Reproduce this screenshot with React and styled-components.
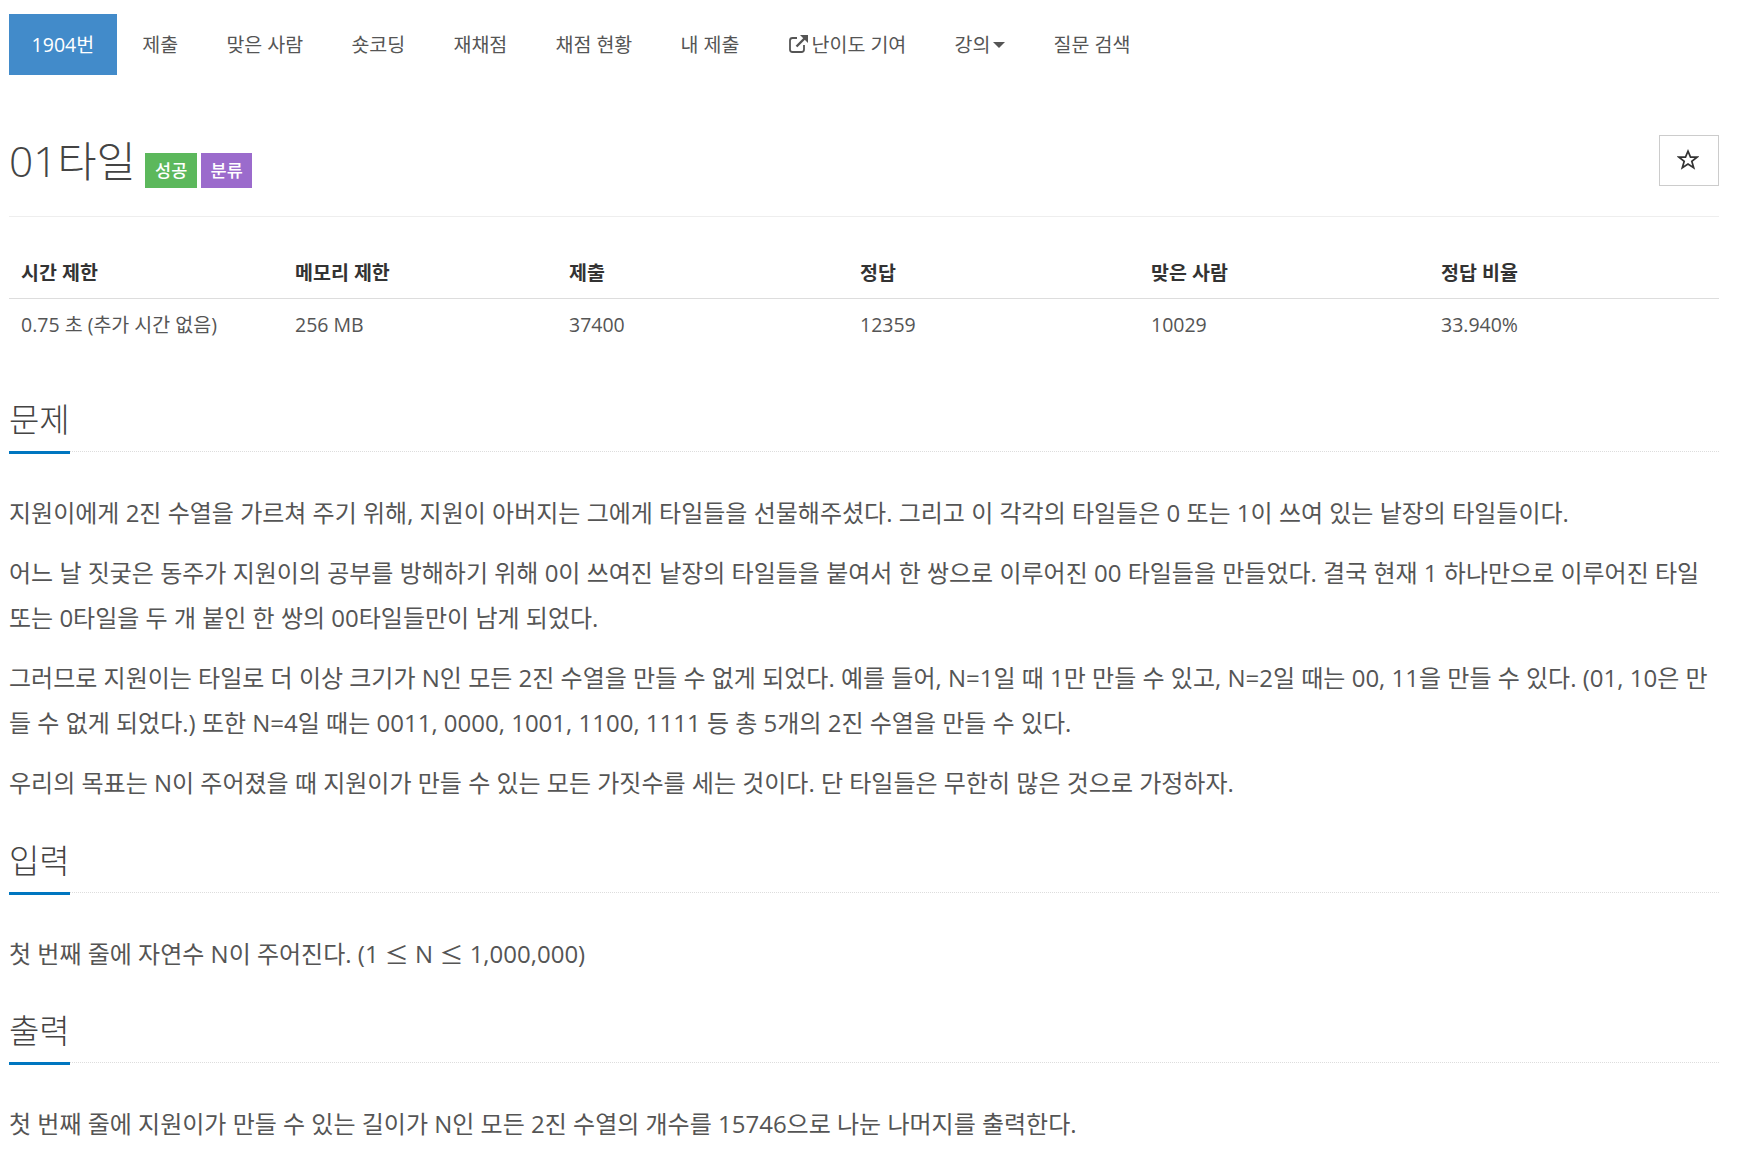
import React from 'react'
import styled, { createGlobalStyle } from 'styled-components'

const GlobalStyle = createGlobalStyle`
  html, body {
    margin: 0;
    padding: 0;
    background: #fff;
    font-family: "Open Sans", "Noto Sans CJK KR", sans-serif;
    color: #555;
  }
`

const Page = styled.div`
  width: 1710px;
  margin-left: 9px;
  padding-top: 14px;
  padding-bottom: 17px;
`

const Nav = styled.nav`
  display: flex;
  gap: 3px;
  height: 61px;
`

const NavItem = styled.a`
  display: flex;
  align-items: center;
  gap: ${p => (p.$gap ? p.$gap : 0)}px;
  padding: 0 22.6px 2px;
  font-size: 19.5px;
  color: ${p => (p.$active ? '#fff' : '#555')};
  background: ${p => (p.$active ? '#428bca' : 'transparent')};
`

const Caret = styled.span`
  width: 0;
  height: 0;
  margin-left: 3px;
  margin-top: 3px;
  border-top: 6px solid #555;
  border-left: 6px solid transparent;
  border-right: 6px solid transparent;
`

const TitleRow = styled.header`
  display: flex;
  align-items: flex-start;
  justify-content: space-between;
  height: 142px;
  box-sizing: border-box;
  padding-top: 60px;
  border-bottom: 1.5px solid #eee;
`

const TitleGroup = styled.div`
  display: flex;
  align-items: flex-start;
`

const Title = styled.h1`
  margin: 0;
  font-size: 42.5px;
  line-height: 52px;
  font-weight: 300;
  color: #444;
`

const Badge = styled.span`
  display: flex;
  align-items: center;
  justify-content: center;
  width: ${p => p.$width}px;
  height: 35px;
  margin-top: 18px;
  margin-left: ${p => p.$left}px;
  padding-bottom: 2px;
  box-sizing: border-box;
  font-size: 17.5px;
  font-weight: 500;
  color: #fff;
  background: ${p => p.$color};
`

const StarButton = styled.button`
  display: flex;
  align-items: center;
  justify-content: center;
  width: 60px;
  height: 51px;
  padding: 0 2px 3px 0;
  background: #fff;
  border: 1.5px solid #ccc;
  color: #333;
`

const InfoGrid = styled.div`
  display: grid;
  grid-template-columns: 274px 274px 291px 291px 290px 290px;
  margin-top: 30px;
`

const HeadCell = styled.div`
  padding: 0 12px;
  height: 51px;
  line-height: 51px;
  font-size: 19.5px;
  font-weight: 700;
  color: #333;
  border-bottom: 1.5px solid #ddd;
`

const BodyCell = styled.div`
  padding: 0 12px;
  height: 53px;
  line-height: 51px;
  font-size: 19.5px;
  color: #555;
`

const Section = styled.section`
  margin-top: ${p => p.$top}px;
`

const Heading = styled.div`
  height: 56px;
  border-bottom: 1px dotted #ddd;
`

const HeadingText = styled.h2`
  display: inline-block;
  height: 56px;
  margin: 0;
  font-size: 33px;
  line-height: 50px;
  font-weight: 300;
  color: #444;
  border-bottom: 3px solid #0076c0;
`

const Body = styled.div`
  padding-top: 38px;
`

const Para = styled.p`
  margin: 0 0 15px;
  font-size: 24px;
  line-height: 45px;
  color: #555;
  word-break: break-all;
`

const MathSign = styled.span`
  font-family: "Noto Sans CJK KR", sans-serif;
  font-size: 24px;
  line-height: 1;
  vertical-align: -1px;
`

function StarIcon() {
  return (
    <svg width="22" height="21" viewBox="0 0 22 21" fill="none" stroke="currentColor" strokeWidth="1.7">
      <path d="M11 2.2l2.5 6h6.500l-5.200 4.100 1.900 6.500L11 15l-5.700 3.800 1.900-6.500L2 8.200h6.500z" />
    </svg>
  )
}

function ExternalIcon() {
  return (
    <svg width="21" height="20" viewBox="0 0 21 20" fill="none" stroke="#555" strokeWidth="1.8">
      <path d="M9 4H4.500A2.500 2.500 0 0 0 2 6.500v9A2.500 2.500 0 0 0 4.500 18h9a2.500 2.500 0 0 0 2.500-2.500V11" />
      <path d="M8.500 12.500L18 3" strokeWidth="2.400" />
      <path d="M12 1h8v8z" fill="#555" stroke="none" />
    </svg>
  )
}

const infoHead = ['시간 제한', '메모리 제한', '제출', '정답', '맞은 사람', '정답 비율']
const infoBody = ['0.75 초 (추가 시간 없음)', '256 MB', '37400', '12359', '10029', '33.940%']

export default function App() {
  return (
    <Page>
      <GlobalStyle />
      <Nav>
        <NavItem $active>1904번</NavItem>
        <NavItem>제출</NavItem>
        <NavItem>맞은 사람</NavItem>
        <NavItem>숏코딩</NavItem>
        <NavItem>재채점</NavItem>
        <NavItem>채점 현황</NavItem>
        <NavItem>내 제출</NavItem>
        <NavItem $gap={3}><ExternalIcon />난이도 기여</NavItem>
        <NavItem>강의<Caret /></NavItem>
        <NavItem>질문 검색</NavItem>
      </Nav>

      <TitleRow>
        <TitleGroup>
          <Title>01타일</Title>
          <Badge $color="#5cb85c" $width={52} $left={9.5}>성공</Badge>
          <Badge $color="#9b6bcc" $width={51} $left={4}>분류</Badge>
        </TitleGroup>
        <StarButton aria-label="즐겨찾기"><StarIcon /></StarButton>
      </TitleRow>

      <InfoGrid>
        {infoHead.map(t => <HeadCell key={t}>{t}</HeadCell>)}
        {infoBody.map(t => <BodyCell key={t}>{t}</BodyCell>)}
      </InfoGrid>

      <Section $top={43}>
        <Heading><HeadingText>문제</HeadingText></Heading>
        <Body>
          <Para>지원이에게 2진 수열을 가르쳐 주기 위해, 지원이 아버지는 그에게 타일들을 선물해주셨다. 그리고 이 각각의 타일들은 0 또는 1이 쓰여 있는 낱장의 타일들이다.</Para>
          <Para>어느 날 짓궂은 동주가 지원이의 공부를 방해하기 위해 0이 쓰여진 낱장의 타일들을 붙여서 한 쌍으로 이루어진 00 타일들을 만들었다. 결국 현재 1 하나만으로 이루어진 타일 또는 0타일을 두 개 붙인 한 쌍의 00타일들만이 남게 되었다.</Para>
          <Para>그러므로 지원이는 타일로 더 이상 크기가 N인 모든 2진 수열을 만들 수 없게 되었다. 예를 들어, N=1일 때 1만 만들 수 있고, N=2일 때는 00, 11을 만들 수 있다. (01, 10은 만들 수 없게 되었다.) 또한 N=4일 때는 0011, 0000, 1001, 1100, 1111 등 총 5개의 2진 수열을 만들 수 있다.</Para>
          <Para>우리의 목표는 N이 주어졌을 때 지원이가 만들 수 있는 모든 가짓수를 세는 것이다. 단 타일들은 무한히 많은 것으로 가정하자.</Para>
        </Body>
      </Section>

      <Section $top={31}>
        <Heading><HeadingText>입력</HeadingText></Heading>
        <Body>
          <Para>첫 번째 줄에 자연수 N이 주어진다. (1 <MathSign>≤</MathSign> N <MathSign>≤</MathSign> 1,000,000)</Para>
        </Body>
      </Section>

      <Section $top={30}>
        <Heading><HeadingText>출력</HeadingText></Heading>
        <Body>
          <Para>첫 번째 줄에 지원이가 만들 수 있는 길이가 N인 모든 2진 수열의 개수를 15746으로 나눈 나머지를 출력한다.</Para>
        </Body>
      </Section>
    </Page>
  )
}
